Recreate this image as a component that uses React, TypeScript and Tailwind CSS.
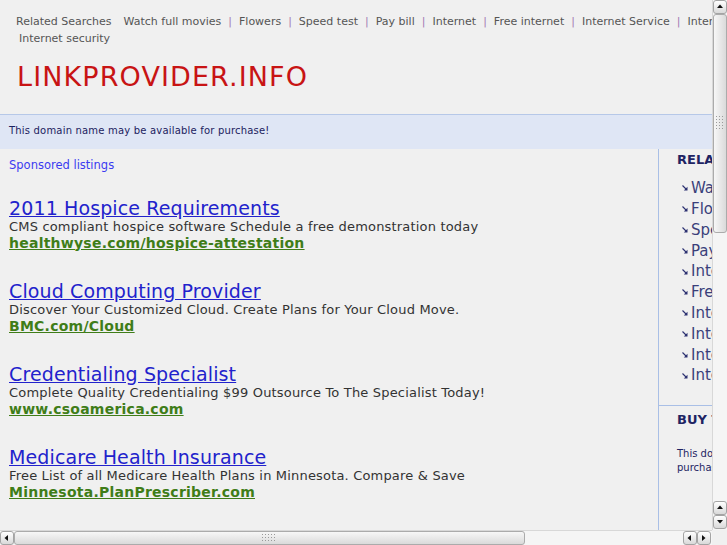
import React from "react";

const links = [
  "Watch full movies",
  "Flowers",
  "Speed test",
  "Pay bill",
  "Internet",
  "Free internet",
  "Internet Service",
  "Internet Providers",
  "Internet Explorer",
  "Internet security",
];

const ads = [
  {
    title: "2011 Hospice Requirements",
    desc: "CMS compliant hospice software Schedule a free demonstration today",
    url: "healthwyse.com/hospice-attestation",
  },
  {
    title: "Cloud Computing Provider",
    desc: "Discover Your Customized Cloud. Create Plans for Your Cloud Move.",
    url: "BMC.com/Cloud",
  },
  {
    title: "Credentialing Specialist",
    desc: "Complete Quality Credentialing $99 Outsource To The Specialist Today!",
    url: "www.csoamerica.com",
  },
  {
    title: "Medicare Health Insurance",
    desc: "Free List of all Medicare Health Plans in Minnesota. Compare & Save",
    url: "Minnesota.PlanPrescriber.com",
  },
];

function Arrow({ dir }: { dir: "up" | "down" | "left" | "right" }) {
  const pts = {
    up: "1,5 4,1.5 7,5",
    down: "1,2 4,5.5 7,2",
    left: "5,1 1.5,4 5,7",
    right: "2,1 5.5,4 2,7",
  }[dir];
  return (
    <svg width="8" height="8" viewBox="0 0 8 8">
      <polygon points={pts} fill="#111" />
    </svg>
  );
}

function Btn({ dir, cls }: { dir: "up" | "down" | "left" | "right"; cls: string }) {
  return (
    <div
      className={
        "flex items-center justify-center border border-[#a4a4a4] rounded-[3px] bg-gradient-to-b from-[#ffffff] to-[#d9d9d9] shrink-0 " +
        cls
      }
    >
      <Arrow dir={dir} />
    </div>
  );
}

function Grip({ vertical }: { vertical: boolean }) {
  const dots: React.ReactNode[] = [];
  const cols = vertical ? 3 : 5;
  const rows = vertical ? 5 : 3;
  for (let r = 0; r < rows; r++)
    for (let c = 0; c < cols; c++)
      dots.push(<rect key={r + "-" + c} x={c * 3} y={r * 3} width="1" height="1" fill="#9a9a9a" />);
  return (
    <svg width={cols * 3} height={rows * 3} viewBox={`0 0 ${cols * 3} ${rows * 3}`}>
      {dots}
    </svg>
  );
}

function ListArrow() {
  return (
    <svg width="6" height="6" viewBox="0 0 6 6" className="shrink-0">
      <line x1="0.5" y1="0.5" x2="4.5" y2="4.5" stroke="#2a2f70" strokeWidth="1.1" />
      <polygon points="5.5,1.8 5.5,5.5 1.8,5.5" fill="#2a2f70" />
    </svg>
  );
}

export default function App() {
  return (
    <div className="w-[727px] h-[545px] flex flex-col overflow-hidden bg-[#f0f0f0] font-['DejaVu_Sans',sans-serif]">
      <div className="flex h-[530px]">
        <div className="w-[712px] h-[530px] overflow-hidden">
          <div className="w-[933px] h-[530px] flex flex-col">
            {/* header */}
            <div className="pt-[13px] pl-[16px] pb-[22px]">
              <div className="flex flex-wrap text-[11px] leading-[17px] text-[#555555]">
                <span className="pr-[9px] whitespace-nowrap">Related Searches</span>
                {links.map((l, i) => (
                  <span key={l} className="flex whitespace-nowrap">
                    <span className="px-[3px]">{l}</span>
                    {i < links.length - 1 && <span className="px-[4px] text-[#a47cb4]">|</span>}
                  </span>
                ))}
              </div>
              <div className="mt-[15px] text-[27px] leading-[30px] tracking-[1.1px] text-[#c81414] pl-[1px]">
                LINKPROVIDER.INFO
              </div>
            </div>
            {/* banner */}
            <div className="border-t border-[#b6c8e8] bg-[#dfe6f5] h-[35px] pt-[8px] pl-[9px] text-[10px] leading-[16px] tracking-[0.19px] text-[#1c2260]">
              This domain name may be available for purchase!
            </div>
            {/* body */}
            <div className="flex flex-1">
              <div className="w-[659px] border-r border-[#a9bfe6] pl-[9px] pt-[8.5px]">
                <div className="text-[11.5px] leading-[15px] text-[#3b3bf0]">Sponsored listings</div>
                <div className="mt-[25px] flex flex-col gap-[29px]">
                  {ads.map((a) => (
                    <div key={a.title} className="flex flex-col items-start">
                      <span className="text-[19px] leading-[21px] tracking-[0.12px] text-[#2222cc] underline">{a.title}</span>
                      <span className="text-[13px] leading-[16px] tracking-[0.18px] text-[#333333]">{a.desc}</span>
                      <span className="text-[14px] leading-[17px] tracking-[0.24px] font-bold text-[#3f7d18] underline">
                        {a.url}
                      </span>
                    </div>
                  ))}
                </div>
              </div>
              <div className="flex-1 flex flex-col">
                <div className="pl-[18px] pt-[3px] pb-[19px] border-b border-[#a9bfe6]">
                  <div className="text-[13px] leading-[16px] font-bold text-[#1e2463] whitespace-nowrap">RELATED SEARCHES</div>
                  <div className="mt-[10px] pl-[5px] flex flex-col">
                    {links.map((l) => (
                      <div key={l} className="flex items-center gap-[3px] h-[20.8px] text-[15px] text-[#3a3f7a] whitespace-nowrap">
                        <ListArrow />
                        <span>{l}</span>
                      </div>
                    ))}
                  </div>
                </div>
                <div className="pl-[18px] pt-[6px]">
                  <div className="text-[13px] leading-[16px] font-bold text-[#1e2463] whitespace-nowrap">BUY THIS DOMAIN</div>
                  <div className="mt-[19px] text-[10px] leading-[14px] text-[#1e2463] w-[230px]">
                    This domain name may be available for purchase. Click here for more information.
                  </div>
                </div>
              </div>
            </div>
          </div>
        </div>
        {/* vertical scrollbar */}
        <div className="w-[15px] h-[530px] flex flex-col bg-[#f5f5f5] border-l border-[#d8d8d8]">
          <Btn dir="up" cls="h-[14px]" />
          <div className="h-[219px] shrink-0 border border-[#ababab] rounded-[3px] bg-gradient-to-r from-[#f7f7f7] to-[#dadada] flex items-center justify-center">
            <Grip vertical />
          </div>
          <div className="flex-1" />
          <Btn dir="up" cls="h-[14px]" />
          <Btn dir="down" cls="h-[14px] mb-[1px]" />
        </div>
      </div>
      {/* horizontal scrollbar */}
      <div className="h-[15px] flex">
        <div className="w-[712px] flex bg-[#f5f5f5] border-t border-[#d8d8d8]">
          <Btn dir="left" cls="w-[14px]" />
          <div className="w-[511px] shrink-0 border border-[#ababab] rounded-[3px] bg-gradient-to-b from-[#f7f7f7] to-[#dadada] flex items-center justify-center">
            <Grip vertical={false} />
          </div>
          <div className="flex-1" />
          <Btn dir="left" cls="w-[14px]" />
          <Btn dir="right" cls="w-[14px] mr-[1px]" />
        </div>
        <div className="flex-1 bg-[#f0f0f0]" />
      </div>
    </div>
  );
}
